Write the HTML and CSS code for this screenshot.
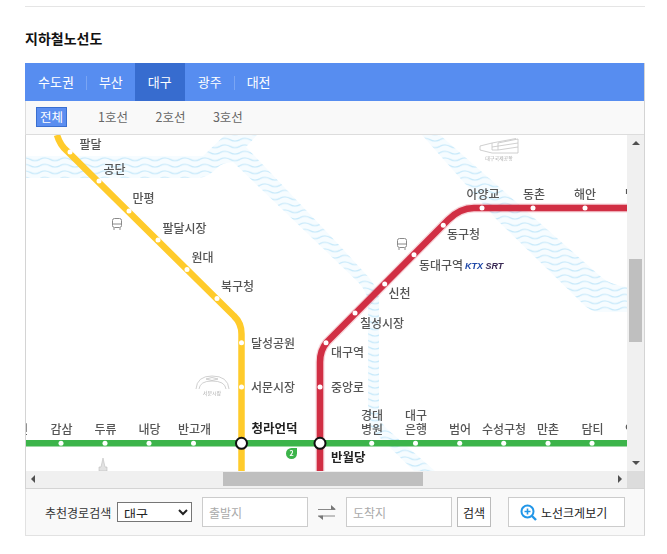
FILE: index.html
```html
<!DOCTYPE html>
<html lang="ko">
<head>
<meta charset="UTF-8">
<meta name="viewport" content="width=device-width, initial-scale=1.0">
<title>지하철노선도</title>
<link rel="stylesheet" href="styles.css">
</head>
<body>

<div class="wrap">
    <h2 class="title">지하철노선도</h2>

    <div class="subway">
        <ul class="tabs">
            <li class="tab">수도권</li>
            <li class="tab">부산</li>
            <li class="tab active">대구</li>
            <li class="tab">광주</li>
            <li class="tab">대전</li>
        </ul>

        <ul class="lines">
            <li class="line on">전체</li>
            <li class="line">1호선</li>
            <li class="line">2호선</li>
            <li class="line">3호선</li>
        </ul>

        <div class="scroller">
            <svg class="map" viewBox="26 135 601 336" width="601" height="336">
                <defs>
                    <pattern id="waves" width="20" height="6.500" patternUnits="userSpaceOnUse">
                        <rect width="20" height="6.500" fill="#f6fcff"/>
                        <path d="M0 3.250 Q5 .5 10 3.250 T20 3.250" fill="none" stroke="#bfe6fa" stroke-width="1.100"/>
                    </pattern>
                </defs>

                <!-- river -->
                <path fill="url(#waves)" d="M26 156H203L225 135H257L246 147L340 246L362 270Q379 287 379 300V412Q379 420 386 428L435 471H414L376 434Q368 425 368 415V305Q368 292 358 282L233 162Q222 163 218 167Q208 178 198 178H26Z"/>
                <path fill="url(#waves)" d="M422 135H440L600 276Q610 285 627 287V312H600Q590 312 582 303L497 220Z"/>

                <!-- landmarks -->
                <g fill="none" stroke="#8a8a8a" stroke-width="1">
                    <rect x="112.500" y="218.500" width="9" height="9" rx="2"/>
                    <path d="M113 224H121M114 228V230M120 228V230"/>
                    <rect x="397.500" y="238.500" width="9" height="9" rx="2"/>
                    <path d="M398 244H406M399 248V250M405 248V250"/>
                </g>
                <g fill="none" stroke="#c4c4c4" stroke-width=".8">
                    <path d="M196 389Q197 376 212 376Q228 376 229 389M199 389Q200 381 212 381Q225 381 226 389"/>
                    <path d="M206 379Q212 376 218 379Q212 382 206 379Z"/>
                    <path d="M480 146L492 143V150H498V143L518 139V153H492L480 150Z"/>
                    <path d="M492 143L516 138.500M492 147L518 143M498 150L518 147"/>
                </g>
                <path d="M103 458L105 467H107V471H99V467H101Z" fill="#e2e2e2" stroke="#bdbdbd" stroke-width=".6"/>
                <text class="tiny" x="212" y="395">서문시장</text>
                <text class="tiny" x="499" y="160">대구국제공항</text>

                <!-- lines -->
                <path class="halo red" d="M320 471V362Q320 350 327 342L448 220Q460 208 474 208H627"/>
                <path class="track green" d="M26 443.300H627"/>
                <path class="track yellow" d="M57 135Q60 145 67 151L234 316Q241.500 323 241.500 334V471"/>
                <path class="track red" d="M320 471V362Q320 350 327 342L448 220Q460 208 474 208H627"/>

                <!-- stations -->
                <g fill="#fff">
                    <circle cx="70" cy="152" r="2.500"/>
                    <circle cx="99" cy="181" r="2.500"/>
                    <circle cx="129" cy="211" r="2.500"/>
                    <circle cx="158" cy="240" r="2.500"/>
                    <circle cx="187" cy="269.500" r="2.500"/>
                    <circle cx="217" cy="298.500" r="2.500"/>
                    <circle cx="241.500" cy="342.700" r="2.500"/>
                    <circle cx="241.500" cy="387" r="2.500"/>
                    <circle cx="326" cy="342.700" r="2.500"/>
                    <circle cx="320" cy="387" r="2.500"/>
                    <circle cx="355" cy="313" r="2.500"/>
                    <circle cx="384.700" cy="284" r="2.500"/>
                    <circle cx="414" cy="254.700" r="2.500"/>
                    <circle cx="443.300" cy="225.300" r="2.500"/>
                    <circle cx="482" cy="208" r="2.500"/>
                    <circle cx="533" cy="208" r="2.500"/>
                    <circle cx="585" cy="208" r="2.500"/>
                    <circle cx="61" cy="443.300" r="2.500"/>
                    <circle cx="105" cy="443.300" r="2.500"/>
                    <circle cx="149" cy="443.300" r="2.500"/>
                    <circle cx="193.500" cy="443.300" r="2.500"/>
                    <circle cx="371.700" cy="443.300" r="2.500"/>
                    <circle cx="415.500" cy="443.300" r="2.500"/>
                    <circle cx="459.700" cy="443.300" r="2.500"/>
                    <circle cx="503.700" cy="443.300" r="2.500"/>
                    <circle cx="548" cy="443.300" r="2.500"/>
                    <circle cx="592" cy="443.300" r="2.500"/>
                </g>
                <circle class="transfer" cx="241.500" cy="443.300" r="5.500"/>
                <circle class="transfer" cx="320" cy="443.300" r="5.500"/>

                <path d="M291.500 448H297V453.500A5.500 5.500 0 1 1 291.500 448Z" fill="#3cb44a"/>
                <text class="badge" x="291.500" y="456">2</text>

                <!-- station names -->
                <g class="names mid">
                    <text x="90.500" y="149">팔달</text>
                    <text x="114.500" y="174">공단</text>
                    <text x="143.500" y="203">만평</text>
                    <text x="184.500" y="233">팔달시장</text>
                    <text x="202.500" y="262">원대</text>
                    <text x="237.500" y="291">북구청</text>
                    <text x="17" y="434">죽전</text>
                    <text x="61.500" y="434">감삼</text>
                    <text x="105.500" y="434">두류</text>
                    <text x="149.500" y="434">내당</text>
                    <text x="194.500" y="434">반고개</text>
                    <text x="372" y="420">경대</text>
                    <text x="372" y="434">병원</text>
                    <text x="416" y="420">대구</text>
                    <text x="416" y="434">은행</text>
                    <text x="460" y="434">범어</text>
                    <text x="504" y="434">수성구청</text>
                    <text x="548" y="434">만촌</text>
                    <text x="592.500" y="434">담티</text>
                    <text x="636" y="434">연호</text>
                    <text x="399.500" y="298">신천</text>
                    <text x="463.500" y="239">동구청</text>
                    <text x="483" y="199">아양교</text>
                    <text x="534" y="199">동촌</text>
                    <text x="585" y="199">해안</text>
                    <text x="636" y="199">방촌</text>
                </g>
                <g class="names">
                    <text x="251" y="347.500">달성공원</text>
                    <text x="251" y="391.500">서문시장</text>
                    <text x="331" y="357">대구역</text>
                    <text x="331" y="392">중앙로</text>
                    <text x="360" y="328">칠성시장</text>
                    <text x="419" y="270">동대구역</text>
                </g>
                <g class="names big">
                    <text x="251.500" y="433">청라언덕</text>
                    <text x="331" y="462">반월당</text>
                </g>
                <text class="rail" x="465" y="268.500"><tspan class="ktx">KTX</tspan> <tspan class="srt">SRT</tspan></text>
            </svg>

            <div class="vbar">
                <span class="arrow up"></span>
                <span class="thumb"></span>
                <span class="arrow down"></span>
            </div>
            <div class="hbar">
                <span class="arrow left"></span>
                <span class="thumb"></span>
                <span class="arrow right"></span>
            </div>
            <div class="corner"></div>
        </div>

        <form class="route">
            <label class="route-label" for="area">추천경로검색</label>
            <select id="area" class="area">
                <option>대구</option>
                <option>수도권</option>
                <option>부산</option>
            </select>
            <input class="stop" type="text" placeholder="출발지">
            <svg class="swap" width="18" height="15" viewBox="0 0 18 15">
                <path d="M0 4.500H17M0 11H17" stroke="#888" stroke-width="1" fill="none"/>
                <path d="M13 0L18 4.500H13Z M5 10.500V15L0 11Z" fill="#777"/>
            </svg>
            <input class="stop" type="text" placeholder="도착지">
            <button class="search" type="button">검색</button>
            <button class="zoom" type="button">
                <svg width="17" height="17" viewBox="0 0 17 17">
                    <circle cx="7.500" cy="7.500" r="6" fill="none" stroke="#2196e8" stroke-width="2"/>
                    <path d="M7.500 4.500V10.500M4.500 7.500H10.500" stroke="#2196e8" stroke-width="1.600"/>
                    <path d="M12 12L16 16" stroke="#2196e8" stroke-width="2.400"/>
                </svg>
                노선크게보기
            </button>
        </form>
    </div>
</div>

</body>
</html>
```

FILE: styles.css
```css
* {
    box-sizing: border-box;
}
body {
    margin: 0;
    background: #fff;
    font-family: "Noto Sans CJK KR", "Noto Sans", sans-serif;
    color: #333;
}
ul {
    list-style: none;
    margin: 0;
    padding: 0;
}
.wrap {
    width: 620px;
    margin: 6px 0 0 25px;
    border-top: 1px solid #e5e5e5;
}
.title {
    margin: 0;
    height: 56px;
    padding-top: 21px;
    font-size: 14px;
    line-height: 20px;
    font-weight: 700;
    color: #111;
}
.subway {
    border-right: 1px solid #d4d4d4;
    border-bottom: 1px solid #e2e2e2;
}
.tabs {
    display: flex;
    height: 38px;
    background: #578df0;
}
.tab {
    position: relative;
    padding: 0 12px 0 13px;
    font-size: 13px;
    line-height: 38px;
    color: #fff;
}
.tab + .tab::before {
    content: "";
    position: absolute;
    left: 0;
    top: 13px;
    height: 14px;
    border-left: 1px solid #7aa5f4;
}
.tab.active {
    padding-right: 13px;
    background: #376ccf;
}
.tab.active::before,
.tab.active + .tab::before {
    display: none;
}
.lines {
    display: flex;
    align-items: center;
    gap: 27.500px;
    height: 34px;
    padding: 0 0 2px 10px;
    background: #f9f9f9;
    border-bottom: 1px solid #ddd;
    border-left: 1px solid #ddd;
}
.line {
    font-size: 12.500px;
    line-height: 18px;
    color: #666;
}
.line.on {
    margin-right: 3.500px;
    padding: 0 3px;
    background: #5b8ef0;
    border: 1px solid #3a6fd0;
    color: #fff;
}
.scroller {
    display: grid;
    grid-template-columns: 601px 17px;
    grid-template-rows: 336px 17px;
    border-left: 1px solid #d4d4d4;
    border-bottom: 1px solid #d4d4d4;
}
.map {
    display: block;
    background: #fff;
    filter: blur(.25px);
}
.track {
    fill: none;
    stroke-width: 6.500;
}
.halo {
    fill: none;
    stroke-width: 9;
    opacity: .2;
}
.red {
    stroke: #d12f44;
}
.yellow {
    stroke: #ffcb2b;
}
.green {
    stroke: #3cb44a;
}
.transfer {
    fill: #fff;
    stroke: #111;
    stroke-width: 2;
}
.names {
    font-size: 12px;
    fill: #555;
    font-weight: 500;
}
.names.mid {
    text-anchor: middle;
}
.names.big {
    font-size: 12.500px;
    font-weight: 700;
    fill: #222;
}
.tiny {
    font-size: 5px;
    fill: #aaa;
    text-anchor: middle;
}
.badge {
    font-size: 7px;
    font-weight: 700;
    fill: #fff;
    text-anchor: middle;
}
.rail {
    font-family: "Liberation Sans", sans-serif;
    font-size: 9px;
    font-style: italic;
    font-weight: 700;
}
.ktx {
    fill: #1f48a8;
}
.srt {
    fill: #3a2a55;
}
.vbar,
.hbar {
    display: flex;
    background: #f0f0f0;
}
.vbar {
    flex-direction: column;
    align-items: center;
    justify-content: space-between;
    padding: 6px 0;
}
.vbar .thumb {
    width: 13px;
    height: 83px;
    margin-top: 106px;
    margin-bottom: 112px;
    background: #bfbfbf;
}
.hbar {
    align-items: center;
    padding: 0 5px 1px;
}
.hbar .thumb {
    width: 200px;
    height: 14px;
    margin-left: 188px;
    margin-right: auto;
    background: #bfbfbf;
}
.corner {
    background: #dcdcdc;
}
.arrow {
    width: 0;
    height: 0;
    border: 4px solid transparent;
}
.arrow.up {
    border-top: 0;
    border-bottom: 4px solid #505050;
}
.arrow.down {
    border-bottom: 0;
    border-top: 4px solid #505050;
}
.arrow.left {
    border-left: 0;
    border-right: 4px solid #505050;
}
.arrow.right {
    border-right: 0;
    border-left: 4px solid #505050;
}
.route {
    display: flex;
    align-items: center;
    height: 46px;
    margin: 0;
    padding-left: 19px;
    background: #f9f9f9;
    border-left: 1px solid #e2e2e2;
}
.route-label {
    width: 72px;
    font-size: 12px;
    color: #333;
}
.area {
    width: 75px;
    height: 20px;
    margin-right: 10px;
    padding: 0 0 3px 2px;
    font-family: inherit;
    font-size: 13px;
    background: #fff;
    color: #222;
    border: 1px solid #767676;
    border-radius: 0;
}
.stop {
    width: 106px;
    height: 30px;
    padding: 0 6px;
    font-family: inherit;
    font-size: 12px;
    background: #fff;
    border: 1px solid #ccc;
    outline: 0;
}
.stop::placeholder {
    color: #aaa;
}
.swap {
    margin: 0 10px;
}
.search,
.zoom {
    height: 30px;
    padding: 0;
    font-family: inherit;
    font-size: 12px;
    background: #fff;
    color: #222;
    border: 1px solid #bbb;
}
.search {
    width: 34px;
    margin: 0 17px 0 5px;
}
.zoom {
    display: flex;
    align-items: center;
    gap: 4px;
    width: 117px;
    padding-left: 11px;
    border-color: #ccc;
}
```
